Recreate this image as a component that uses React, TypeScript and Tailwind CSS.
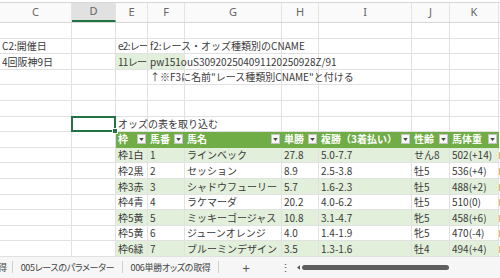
import clsx from "clsx";

type Cell = {
  t?: string;
  bg?: string;
  clip?: boolean;
  head?: boolean;
  filter?: boolean;
  sel?: boolean;
  mark?: boolean;
};

const COLS = [
  "w-[72px]",
  "w-[44px]",
  "w-[32px]",
  "w-[37px]",
  "w-[97px]",
  "w-[37px]",
  "w-[93px]",
  "w-[38px]",
  "w-[49px]",
  "w-[40px]",
];
const LETTERS = ["C", "D", "E", "F", "G", "H", "I", "J", "K", ""];
const STRIPE = "bg-[#e2efda]";

const HEADERS = ["枠", "馬番", "馬名", "単勝", "複勝（3着払い）", "性齢", "馬体重"];

const HORSES = [
  ["枠1白", "1", "ラインベック", "27.8", "5.0-7.7", "せん8", "502(+14)"],
  ["枠2黒", "2", "セッション", "8.9", "2.5-3.8", "牡5", "536(+4)"],
  ["枠3赤", "3", "シャドウフューリー", "5.7", "1.6-2.3", "牡5", "488(+2)"],
  ["枠4青", "4", "ラケマーダ", "20.2", "4.0-6.2", "牡5", "510(0)"],
  ["枠5黄", "5", "ミッキーゴージャス", "10.8", "3.1-4.7", "牝5", "458(+6)"],
  ["枠5黄", "6", "ジューンオレンジ", "4.0", "1.4-1.9", "牝5", "470(-4)"],
  ["枠6緑", "7", "ブルーミンデザイン", "3.5", "1.3-1.6", "牡4", "494(+4)"],
];

const rows: (Cell | undefined)[][] = [
  [],
  [{ t: "C2:開催日" }, undefined, { t: "e2:レー", clip: true }, { t: "f2:レース・オッズ種類別のCNAME" }],
  [
    { t: "4回阪神9日" },
    undefined,
    { t: "11レー", clip: true, bg: STRIPE },
    { t: "pw151ouS309202504091120250928Z/91", bg: STRIPE },
  ],
  [undefined, undefined, undefined, { t: '↑※F3に名前"レース種類別CNAME"と付ける' }],
  [],
  [],
  [undefined, { sel: true }, { t: "オッズの表を取り込む" }],
  [undefined, undefined, ...HEADERS.map((t) => ({ t, head: true, filter: true }))],
  ...HORSES.map((h, i) => [
    undefined,
    undefined,
    ...h.map((t) => ({ t, bg: i % 2 === 0 ? STRIPE : undefined })),
    { mark: true },
  ]),
];

function FilterButton() {
  return (
    <span className="relative z-10 mr-[1px] ml-auto flex h-[10px] w-[9px] shrink-0 items-center justify-center self-center border border-[#c4c4c4] bg-[#f7f7f7]">
      <svg viewBox="0 0 6 4" className="h-[3px] w-[5px]">
        <path d="M0 0h6L3 4z" fill="#444" />
      </svg>
    </span>
  );
}

function GridCell({ w, c }: { w: string; c?: Cell }) {
  return (
    <div
      className={clsx(
        w,
        "relative flex h-full shrink-0 border-r border-b",
        c?.head ? "items-center border-[#70ad47] bg-[#70ad47]" : "items-end border-[#e1e1e1]",
        c?.bg,
        c?.clip && "overflow-hidden"
      )}
    >
      {c?.t && (
        <span
          className={clsx(
            "relative z-10 whitespace-nowrap pl-[2px] leading-[12px]",
            c.head ? "font-bold text-white" : "pb-[1px] text-[#3a3a3a]",
            c.clip && "tracking-[-0.7px]"
          )}
        >
          {c.t}
        </span>
      )}
      {c?.filter && <FilterButton />}
      {c?.sel && (
        <div className="absolute -top-[1px] -left-[1px] z-20 h-[calc(100%+2px)] w-[calc(100%+2px)] border-2 border-[#217346]">
          <div className="absolute -right-[4px] -bottom-[4px] h-[6px] w-[6px] border border-white bg-[#217346]" />
        </div>
      )}
      {c?.mark && <div className="mb-[3px] h-[7px] w-[2px] bg-[#f2b84b]" />}
    </div>
  );
}

export default function App() {
  return (
    <div
      className="flex h-[278px] w-[500px] flex-col overflow-hidden bg-white text-[10px]"
      style={{ fontFamily: '"Noto Sans CJK JP", "Noto Sans", sans-serif' }}
    >
      {/* column letters */}
      <div className="h-[2px] shrink-0 bg-white" />
      <div className="flex h-[21px] shrink-0 border-t border-b border-[#d6d6d6] bg-[#fafafa]">
        {COLS.map((w, i) => (
          <div
            key={i}
            className={clsx(
              w,
              "flex shrink-0 items-center justify-center border-r border-[#e4e4e4] font-['Noto_Sans',sans-serif] text-[11px] text-[#666]",
              i === 1 && "border-b-2 border-b-[#217346] bg-[#e1e1e1]"
            )}
          >
            {LETTERS[i]}
          </div>
        ))}
      </div>

      {/* sheet cells */}
      <div className="flex shrink-0 flex-col">
        {rows.map((r, ri) => (
          <div key={ri} className="flex h-[15.6px]">
            {COLS.map((w, ci) => (
              <GridCell key={ci} w={w} c={r[ci]} />
            ))}
          </div>
        ))}
      </div>

      {/* sheet tabs */}
      <div className="flex flex-1 items-center bg-[#f6f6f6] text-[9px] tracking-[-0.3px] text-[#444] [font-feature-settings:'palt']">
        <div className="-ml-[2px] w-[14px] shrink-0">得</div>
        <div className="h-[12px] w-px shrink-0 bg-[#cfcfcf]" />
        <div className="w-[109px] shrink-0 text-center">005レースのパラメーター</div>
        <div className="h-[12px] w-px shrink-0 bg-[#cfcfcf]" />
        <div className="w-[95px] shrink-0 text-center">006単勝オッズの取得</div>
        <div className="h-[12px] w-px shrink-0 bg-[#cfcfcf]" />
        <div className="w-[54px] shrink-0 text-center text-[13px] text-[#555]">+</div>
        <div className="w-[24px] shrink-0 text-center text-[11px] text-[#555]">⋮</div>
        <svg viewBox="0 0 4 6" className="mr-[2px] h-[5px] w-[3px] shrink-0">
          <path d="M4 0v6L0 3z" fill="#555" />
        </svg>
        <div className="h-[5px] w-[147px] shrink-0 rounded-full bg-[#5e5e5e]" />
      </div>
    </div>
  );
}
